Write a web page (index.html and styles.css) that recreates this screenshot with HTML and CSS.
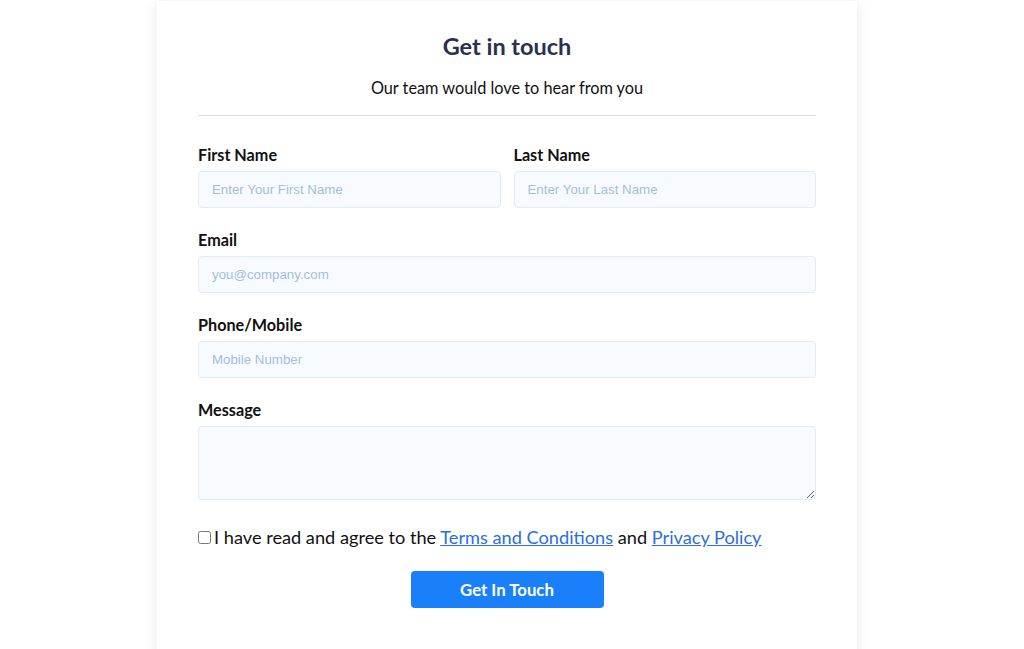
FILE: index.html
```html
<!DOCTYPE html>
<html>
<head>
<meta charset="utf-8">
<link rel="stylesheet" href="styles.css">
</head>
<body>
<div class="page">
  <div class="card">
    <h1 class="title">Get in touch</h1>
    <p class="subtitle">Our team would love to hear from you</p>
    <hr class="divider">
    <form class="form">
      <div class="row two">
        <div class="field">
          <label class="label">First Name</label>
          <input class="input" type="text" placeholder="Enter Your First Name">
        </div>
        <div class="field">
          <label class="label">Last Name</label>
          <input class="input" type="text" placeholder="Enter Your Last Name">
        </div>
      </div>
      <div class="field">
        <label class="label">Email</label>
        <input class="input" type="text" placeholder="you@company.com">
      </div>
      <div class="field">
        <label class="label">Phone/Mobile</label>
        <input class="input" type="text" placeholder="Mobile Number">
      </div>
      <div class="field">
        <label class="label">Message</label>
        <textarea class="input textarea"></textarea>
      </div>
      <div class="agree">
        <input type="checkbox" class="check">
        <span>I have read and agree to the <a href="#" class="link">Terms and Conditions</a> and <a href="#" class="link">Privacy Policy</a></span>
      </div>
      <div class="actions">
        <button type="button" class="btn">Get In Touch</button>
      </div>
    </form>
  </div>
</div>
</body>
</html>
```
FILE: styles.css
```css
html, body {
  margin: 0;
  padding: 0;
  background: #fff;
  overflow: hidden;
}
body {
  font-family: "Lato", "Noto Sans", sans-serif;
  color: #111;
}
.page {
  display: flex;
  justify-content: center;
  padding-right: 10px;
}
.card {
  width: 618px;
  margin-top: 1px;
  padding: 30px 41px 60px;
  background: #fff;
  box-shadow: 0 0 14px rgba(0, 0, 0, 0.09);
  min-height: 700px;
}
.title {
  margin: 0;
  text-align: center;
  font-size: 23.5px;
  line-height: 30px;
  font-weight: 700;
  color: #2a3050;
}
.subtitle {
  margin: 16px 0 0;
  text-align: center;
  font-size: 16.3px;
  line-height: 22px;
  color: #111;
}
.divider {
  margin: 16px 0 0;
  border: 0;
  border-top: 1px solid #dcdcdc;
}
.form {
  display: flex;
  flex-direction: column;
  padding-top: 29px;
}
.row.two {
  display: grid;
  grid-template-columns: 1fr 1fr;
  gap: 13px;
}
.field {
  display: flex;
  flex-direction: column;
  margin-bottom: 22px;
}
.label {
  font-size: 16.2px;
  line-height: 20px;
  font-weight: 700;
  color: #111;
  margin-bottom: 6px;
}
.input {
  box-sizing: border-box;
  height: 37px;
  width: 100%;
  padding: 0 13px;
  background: #f7fbff;
  border: 1px solid #e1ebf4;
  border-radius: 4px;
  font-family: "Liberation Sans", Arial, sans-serif;
  font-size: 13.3px;
  color: #111;
  outline: none;
}
.input::placeholder {
  color: #a6bde0;
}
.textarea {
  height: 74px;
  resize: vertical;
  padding: 8px 13px;
}
.agree {
  display: flex;
  align-items: center;
  gap: 3px;
  font-size: 18.2px;
  line-height: 22px;
  margin-top: 4px;
}
.check {
  margin: 0;
  width: 13px;
  height: 13px;
}
.link {
  color: #2a6fdb;
  text-decoration: underline;
}
.actions {
  display: flex;
  justify-content: center;
  margin-top: 23px;
}
.btn {
  width: 193px;
  height: 37px;
  border: 0;
  border-radius: 4px;
  background: #1a7ffb;
  color: #fff;
  font-family: "Lato", "Noto Sans", sans-serif;
  font-size: 16.8px;
  font-weight: 700;
  cursor: pointer;
}
```
